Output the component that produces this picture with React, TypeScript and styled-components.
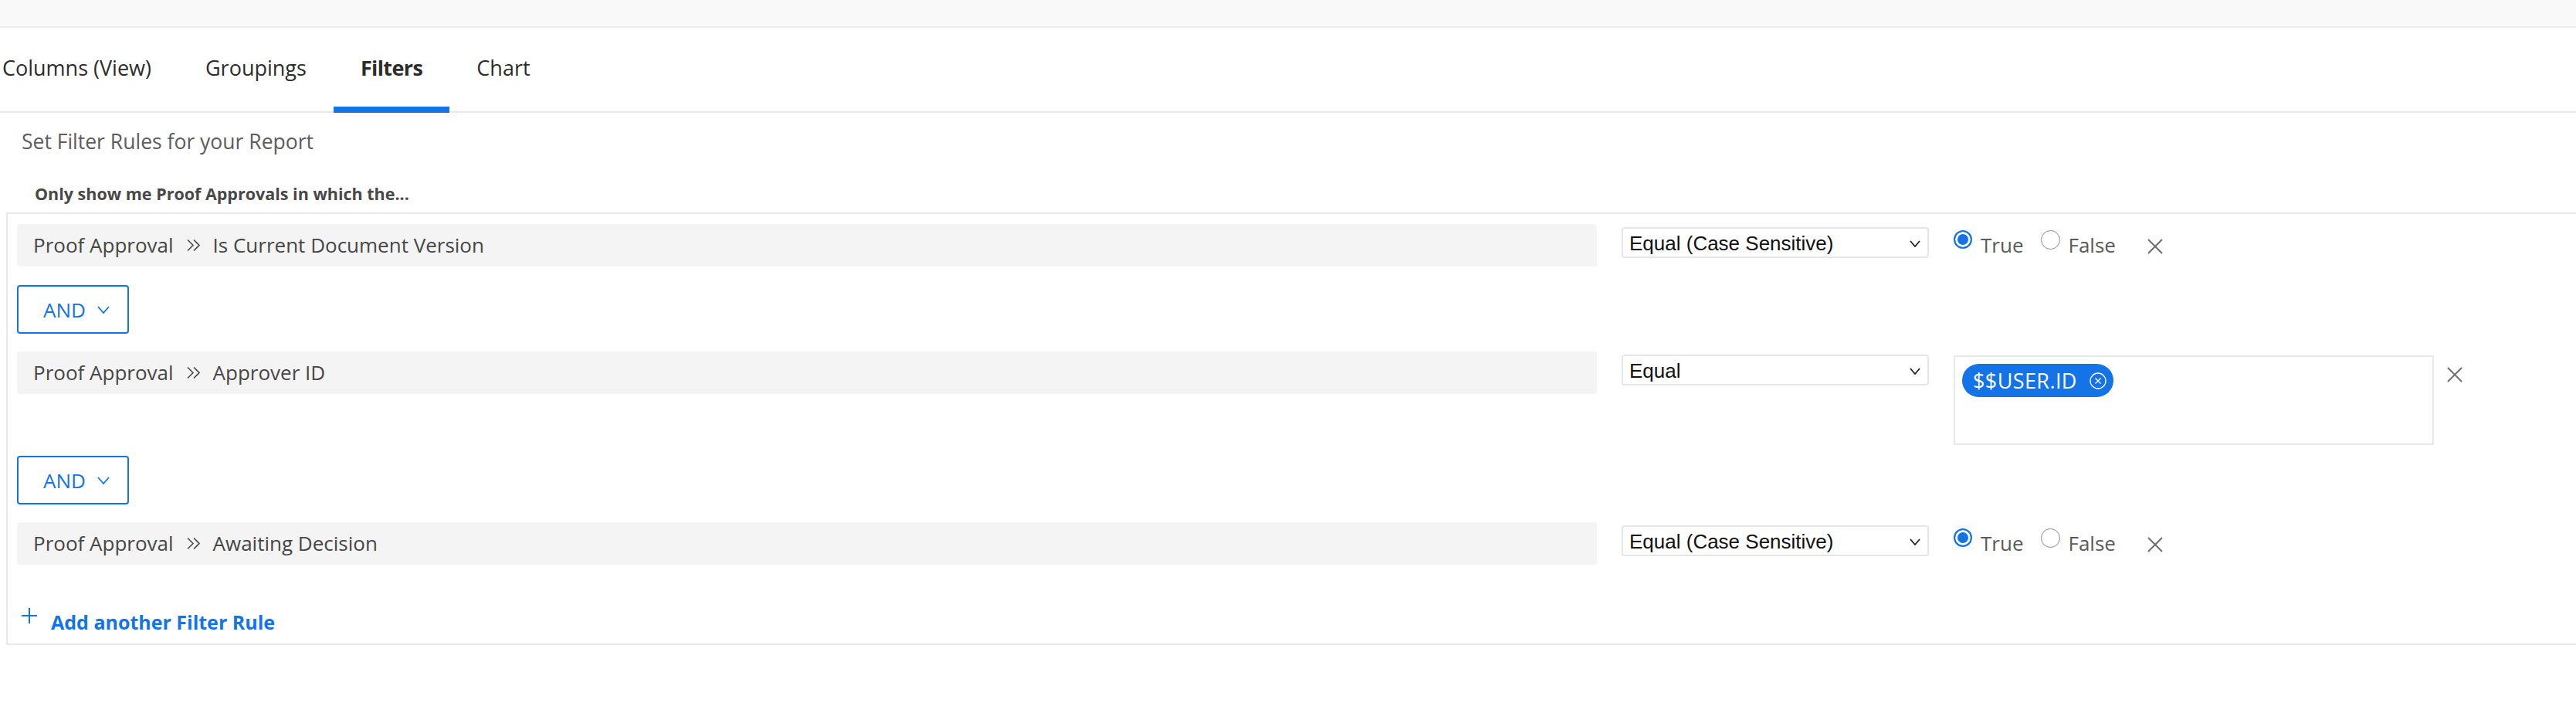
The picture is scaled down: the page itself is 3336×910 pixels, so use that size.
import React from "react";
import styled, { createGlobalStyle } from "styled-components";

const blue = "#1473e6";

const GlobalStyle = createGlobalStyle`
  html, body {
    margin: 0;
    padding: 0;
    background: #fff;
  }
  body {
    font-family: "Open Sans", Lato, sans-serif;
    color: #2c2c2c;
    overflow: hidden;
  }
`;

const TopStrip = styled.div`
  height: 34px;
  background: #f9f9f9;
  border-bottom: 2px solid #ebebeb;
`;

const TabBar = styled.div`
  height: 108px;
  border-bottom: 2px solid #e8e8e8;
`;

const TabList = styled.div`
  display: flex;
  margin-left: -32px;
`;

const Tab = styled.div<{ $active?: boolean }>`
  box-sizing: border-box;
  height: 110px;
  padding: 0 35px;
  display: flex;
  align-items: center;
  font-size: 27px;
  font-weight: ${(p) => (p.$active ? 700 : 400)};
  letter-spacing: ${(p) => (p.$active ? "-0.6px" : "0")};
  color: #2c2c2c;
  border-bottom: 8px solid ${(p) => (p.$active ? blue : "transparent")};
`;

const Heading = styled.div`
  margin: 22px 0 0 28px;
  font-size: 26.5px;
  line-height: 30px;
  color: #5c5c5c;
`;

const Lead = styled.div`
  margin: 41px 0 0 45px;
  font-size: 21.5px;
  line-height: 24px;
  font-weight: 700;
  color: #484848;
`;

const Panel = styled.div`
  margin: 12px 0 0 8px;
  border: 2px solid #e8e8e8;
  border-right: none;
  padding: 13px 0 13px 12px;
`;

const RuleRow = styled.div<{ $after: number }>`
  display: grid;
  grid-template-columns: 2046px 398px auto;
  column-gap: 32px;
  align-items: start;
  margin-bottom: ${(p) => p.$after}px;
`;

const FieldBox = styled.div`
  height: 55px;
  background: #f4f4f4;
  border-radius: 4px;
  display: flex;
  align-items: center;
  gap: 16px;
  padding-left: 21px;
  font-size: 26px;
  line-height: 55px;
  color: #464646;
`;

const SelectBox = styled.div`
  box-sizing: border-box;
  margin-top: 4px;
  height: 40px;
  border: 2px solid #e6e6e6;
  border-radius: 4px;
  background: #fff;
  display: flex;
  align-items: center;
  justify-content: space-between;
  padding: 2px 9px 0 8px;
  font-family: "Liberation Sans", Arial, sans-serif;
  font-size: 26px;
  color: #111;
`;

const BoolGroup = styled.div`
  display: flex;
  align-items: flex-start;
  margin-top: 8px;
`;

const Radio = styled.span<{ $checked?: boolean }>`
  box-sizing: border-box;
  display: block;
  flex: none;
  width: ${(p) => (p.$checked ? 24 : 25)}px;
  height: ${(p) => (p.$checked ? 24 : 25)}px;
  border-radius: 50%;
  border: ${(p) => (p.$checked ? `2px solid ${blue}` : "1.5px solid #8c8c8c")};
  background: ${(p) => (p.$checked ? blue : "#fff")};
  box-shadow: ${(p) => (p.$checked ? "inset 0 0 0 3px #fff" : "none")};
`;

const RadioLabel = styled.span<{ $gap: number }>`
  font-size: 26px;
  line-height: 30px;
  color: #5a5a5a;
  margin: 4px ${(p) => p.$gap}px 0 11px;
`;

const CloseIcon = styled.svg<{ $top: number; $left?: number }>`
  flex: none;
  margin-top: ${(p) => p.$top}px;
  margin-left: ${(p) => p.$left ?? 0}px;
`;

const ValueCell = styled.div`
  display: flex;
  align-items: flex-start;
`;

const MultiBox = styled.div`
  box-sizing: border-box;
  margin-top: 5px;
  width: 622px;
  height: 116px;
  border: 2px solid #e8e8e8;
  padding: 9px;
`;

const Pill = styled.span`
  display: inline-flex;
  align-items: center;
  gap: 16px;
  height: 43px;
  border-radius: 22px;
  background: ${blue};
  color: #fff;
  padding: 0 9px 0 14px;
  font-size: 27px;
  letter-spacing: 0.4px;
`;

const AndButton = styled.div`
  box-sizing: border-box;
  width: 145px;
  height: 63px;
  border: 2px solid ${blue};
  border-radius: 4px;
  display: flex;
  align-items: center;
  gap: 15px;
  padding-left: 32px;
  font-size: 26px;
  color: ${blue};
  margin-bottom: 23px;
`;

const AddRule = styled.div`
  display: flex;
  align-items: flex-start;
  gap: 17px;
  margin: 59px 0 0 5px;
  font-size: 25px;
  line-height: 30px;
  font-weight: 700;
  color: ${blue};
`;

const PlusIcon = styled.svg`
  flex: none;
  margin-top: -4px;
`;

const DoubleChevron = () => (
  <svg width="19" height="17" viewBox="0 0 19 17" fill="none" stroke="#4a4a4a" strokeWidth="1.6">
    <path d="M2 1.5 L9 8.5 L2 15.5" />
    <path d="M10 1.5 L17 8.5 L10 15.5" />
  </svg>
);

const Chevron = ({ color = "#222", w = 14, h = 9 }: { color?: string; w?: number; h?: number }) => (
  <svg width={w} height={h} viewBox={`0 0 ${w} ${h}`} fill="none" stroke={color} strokeWidth="1.8">
    <path d={`M1 1 L${w / 2} ${h - 1} L${w - 1} 1`} />
  </svg>
);

const Close = ({ top, left }: { top: number; left?: number }) => (
  <CloseIcon $top={top} $left={left} width="22" height="20" viewBox="0 0 22 20" fill="none" stroke="#6e6e6e" strokeWidth="2">
    <path d="M2 1 L20 19 M20 1 L2 19" />
  </CloseIcon>
);

const Field = ({ name }: { name: string }) => (
  <FieldBox>
    <span>Proof Approval</span>
    <DoubleChevron />
    <span>{name}</span>
  </FieldBox>
);

const Select = ({ value }: { value: string }) => (
  <SelectBox>
    <span>{value}</span>
    <Chevron />
  </SelectBox>
);

const TrueFalse = () => (
  <BoolGroup>
    <Radio $checked />
    <RadioLabel $gap={22}>True</RadioLabel>
    <Radio />
    <RadioLabel $gap={40}>False</RadioLabel>
    <Close top={11} />
  </BoolGroup>
);

const And = () => (
  <AndButton>
    <span>AND</span>
    <Chevron color={blue} w={16} h={10} />
  </AndButton>
);

export default function App() {
  return (
    <>
      <GlobalStyle />
      <TopStrip />
      <TabBar>
        <TabList>
          <Tab>Columns (View)</Tab>
          <Tab>Groupings</Tab>
          <Tab $active>Filters</Tab>
          <Tab>Chart</Tab>
        </TabList>
      </TabBar>
      <Heading>Set Filter Rules for your Report</Heading>
      <Lead>Only show me Proof Approvals in which the...</Lead>
      <Panel>
        <RuleRow $after={24}>
          <Field name="Is Current Document Version" />
          <Select value="Equal (Case Sensitive)" />
          <TrueFalse />
        </RuleRow>
        <And />
        <RuleRow $after={14}>
          <Field name="Approver ID" />
          <Select value="Equal" />
          <ValueCell>
            <MultiBox>
              <Pill>
                <span>$$USER.ID</span>
                <svg width="22" height="22" viewBox="0 0 22 22" fill="none" stroke="#fff" strokeWidth="1.3">
                  <circle cx="11" cy="11" r="10" />
                  <path d="M7.5 7.5 L14.5 14.5 M14.5 7.5 L7.5 14.5" />
                </svg>
              </Pill>
            </MultiBox>
            <Close top={20} left={16} />
          </ValueCell>
        </RuleRow>
        <And />
        <RuleRow $after={0}>
          <Field name="Awaiting Decision" />
          <Select value="Equal (Case Sensitive)" />
          <TrueFalse />
        </RuleRow>
        <AddRule>
          <PlusIcon width="22" height="22" viewBox="0 0 22 22" fill="none" stroke={blue} strokeWidth="2">
            <path d="M11 1 V21 M1 11 H21" />
          </PlusIcon>
          <span>Add another Filter Rule</span>
        </AddRule>
      </Panel>
    </>
  );
}
